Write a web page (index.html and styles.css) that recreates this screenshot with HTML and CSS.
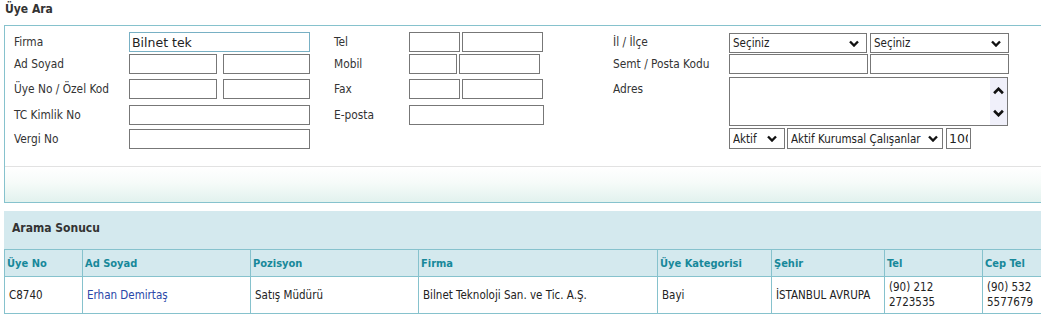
FILE: index.html
```html
<!DOCTYPE html>
<html lang="tr">
<head>
  <meta charset="UTF-8">
  <title>Üye Ara</title>
  <link rel="stylesheet" href="styles.css">
</head>
<body>
  <h1 class="page-title">Üye Ara</h1>

  <div class="search-box">
    <div class="search-form">
      <!-- satır 1 -->
      <label class="lbl">Firma</label>
      <div class="field"><input type="text" class="txt w181 focused" value="Bilnet tek"></div>
      <label class="lbl">Tel</label>
      <div class="field gap2"><input type="text" class="txt w51"><input type="text" class="txt w81"></div>
      <label class="lbl">İl / İlçe</label>
      <div class="field gap3">
        <div class="sel w138"><select><option>Seçiniz</option></select><svg class="chev" viewBox="0 0 10 7"><path d="M1 1.5l4 4 4-4"/></svg></div>
        <div class="sel w139"><select><option>Seçiniz</option></select><svg class="chev" viewBox="0 0 10 7"><path d="M1 1.5l4 4 4-4"/></svg></div>
      </div>

      <!-- satır 2 -->
      <label class="lbl">Ad Soyad</label>
      <div class="field gap6"><input type="text" class="txt w88"><input type="text" class="txt w87"></div>
      <label class="lbl">Mobil</label>
      <div class="field gap2"><input type="text" class="txt w48"><input type="text" class="txt w81"></div>
      <label class="lbl">Semt / Posta Kodu</label>
      <div class="field gap2"><input type="text" class="txt w139"><input type="text" class="txt w139"></div>

      <!-- satır 3 -->
      <label class="lbl">Üye No / Özel Kod</label>
      <div class="field gap6"><input type="text" class="txt w88"><input type="text" class="txt w87"></div>
      <label class="lbl">Fax</label>
      <div class="field gap2"><input type="text" class="txt w51"><input type="text" class="txt w81"></div>
      <label class="lbl">Adres</label>
      <div class="field memo-cell">
        <div class="memo">
          <textarea></textarea>
          <div class="memo-bar">
            <svg class="arrow" viewBox="0 0 10 7"><path d="M1 5.5l4-4 4 4"/></svg>
            <svg class="arrow" viewBox="0 0 10 7"><path d="M1 1.5l4 4 4-4"/></svg>
          </div>
        </div>
      </div>

      <!-- satır 4 -->
      <label class="lbl">TC Kimlik No</label>
      <div class="field"><input type="text" class="txt w181"></div>
      <label class="lbl">E-posta</label>
      <div class="field"><input type="text" class="txt w135"></div>
      <span></span>

      <!-- satır 5 -->
      <label class="lbl">Vergi No</label>
      <div class="field"><input type="text" class="txt w181"></div>
      <span></span>
      <span></span>
      <span></span>
      <div class="field status-row">
        <div class="sel w56"><select><option>Aktif</option></select><svg class="chev" viewBox="0 0 10 7"><path d="M1 1.5l4 4 4-4"/></svg></div>
        <div class="sel w156"><select><option>Aktif Kurumsal Çalışanlar</option></select><svg class="chev tight" viewBox="0 0 10 7"><path d="M1 1.5l4 4 4-4"/></svg></div>
        <input type="text" class="txt w25" value="100">
      </div>
    </div>
    <div class="search-footer"></div>
  </div>

  <div class="result-band">Arama Sonucu</div>

  <table class="result-table">
    <colgroup>
      <col class="c-no">
      <col class="c-name">
      <col class="c-pos">
      <col class="c-firm">
      <col class="c-cat">
      <col class="c-city">
      <col class="c-tel">
      <col class="c-tel">
    </colgroup>
    <thead>
      <tr>
        <th>Üye No</th>
        <th>Ad Soyad</th>
        <th>Pozisyon</th>
        <th>Firma</th>
        <th>Üye Kategorisi</th>
        <th>Şehir</th>
        <th>Tel</th>
        <th>Cep Tel</th>
      </tr>
    </thead>
    <tbody>
      <tr>
        <td>C8740</td>
        <td><a href="#">Erhan Demirtaş</a></td>
        <td>Satış Müdürü</td>
        <td>Bilnet Teknoloji San. ve Tic. A.Ş.</td>
        <td>Bayi</td>
        <td>İSTANBUL AVRUPA</td>
        <td>(90) 212 2723535</td>
        <td>(90) 532 5577679</td>
      </tr>
    </tbody>
  </table>
</body>
</html>
```

FILE: styles.css
```css
:root {
  --line: #86c2cd;
  --band: #d4e9ee;
  --head: #17889a;
  --text: #262626;
  --box: #777777;
}

html, body {
  overflow: hidden;
}

body {
  margin: 0;
  padding: 0 0 0 4px;
  background: #ffffff;
  color: var(--text);
  font-family: "DejaVu Sans Condensed", "DejaVu Sans", sans-serif;
  font-stretch: condensed;
  font-size: 11.5px;
}

.page-title {
  margin: 0;
  padding-left: 1px;
  height: 25px;
  line-height: 18px;
  font-size: 12px;
  font-weight: bold;
  color: #333;
}

/* arama kutusu */
.search-box {
  border-top: 1px solid var(--line);
  border-left: 1px solid var(--line);
  border-bottom: 1px solid var(--line);
}

.search-form {
  display: grid;
  grid-template-columns: 115px 205px 75px 204px 116px 1fr;
  grid-template-rows: 22px 25px 26px 24px 20px;
  padding: 6px 0 17px 9px;
}

.lbl {
  align-self: start;
  line-height: 20px;
  color: #333;
  font-size: 11.8px;
  white-space: nowrap;
}

.field {
  display: flex;
  align-items: flex-start;
}

.gap2 { gap: 2px; }
.gap3 { gap: 3px; }
.gap6 { gap: 6px; }

.txt {
  box-sizing: border-box;
  height: 20px;
  margin: 0;
  padding: 0 2px;
  border: 1px solid var(--box);
  background: #fff;
  color: #222;
  font-family: "DejaVu Sans", sans-serif;
  font-size: 12.5px;
  outline: none;
}

.txt.focused {
  border-color: #78b0c4;
}

.w25 { width: 25px; }
.w48 { width: 48px; }
.w51 { width: 51px; }
.w56 { width: 56px; }
.w81 { width: 81px; }
.w87 { width: 87px; }
.w88 { width: 88px; }
.w135 { width: 135px; }
.w138 { width: 138px; }
.w139 { width: 139px; }
.w156 { width: 156px; }
.w181 { width: 181px; }

.sel {
  box-sizing: border-box;
  display: flex;
  align-items: center;
  height: 20px;
  margin-top: 1px;
  border: 1px solid var(--box);
  background: #fff;
}

.sel select {
  flex: 1;
  min-width: 0;
  height: 100%;
  padding: 0 3px;
  border: none;
  background: transparent;
  color: #222;
  font-family: inherit;
  font-stretch: condensed;
  font-size: 11.5px;
  appearance: none;
  -webkit-appearance: none;
  outline: none;
}

.chev {
  width: 10px;
  height: 7px;
  margin-right: 7px;
  flex: none;
}

.chev.tight {
  margin-right: 4px;
}

.chev path,
.arrow path {
  fill: none;
  stroke: #111;
  stroke-width: 2.4;
}

.memo-cell {
  grid-row: span 2;
  margin-top: -2px;
}

.memo {
  box-sizing: border-box;
  display: flex;
  width: 279px;
  height: 49px;
  border: 1px solid var(--box);
}

.memo textarea {
  flex: 1;
  border: none;
  resize: none;
  outline: none;
  padding: 2px;
}

.memo-bar {
  width: 17px;
  background: #f0f0fa;
  display: flex;
  flex-direction: column;
  align-items: center;
  justify-content: center;
  gap: 14px;
}

.arrow {
  width: 11px;
  height: 8px;
}

.status-row {
  margin-top: -1px;
  gap: 2px;
}

.status-row .sel {
  height: 21px;
  margin-top: 0;
}

.status-row .txt {
  height: 21px;
  margin-left: 1px;
}

.search-footer {
  height: 35px;
  border-top: 1px solid #e2e2e2;
  background: linear-gradient(to bottom, #ffffff 0%, #f6fbf9 45%, #e2f2ee 100%);
}

/* sonuç */
.result-band {
  margin-top: 8px;
  height: 38px;
  padding-left: 8px;
  line-height: 35px;
  background: var(--band);
  font-size: 12px;
  font-weight: bold;
  color: #333;
}

.result-table {
  table-layout: fixed;
  width: 1076px;
  border-collapse: collapse;
}

.c-no { width: 78px; }
.c-name { width: 168px; }
.c-pos { width: 168px; }
.c-firm { width: 239px; }
.c-cat { width: 114px; }
.c-city { width: 113px; }
.c-tel { width: 98px; }

.result-table th,
.result-table td {
  border: 1px solid var(--line);
  text-align: left;
  vertical-align: middle;
}

.result-table th {
  height: 26px;
  padding: 0 2px;
  background: var(--band);
  color: var(--head);
  font-size: 11px;
  font-weight: bold;
}

.result-table td {
  height: 36px;
  padding: 0 4px;
  line-height: 15px;
  color: #222;
}

.result-table a {
  color: #2846a8;
  text-decoration: none;
}
```
